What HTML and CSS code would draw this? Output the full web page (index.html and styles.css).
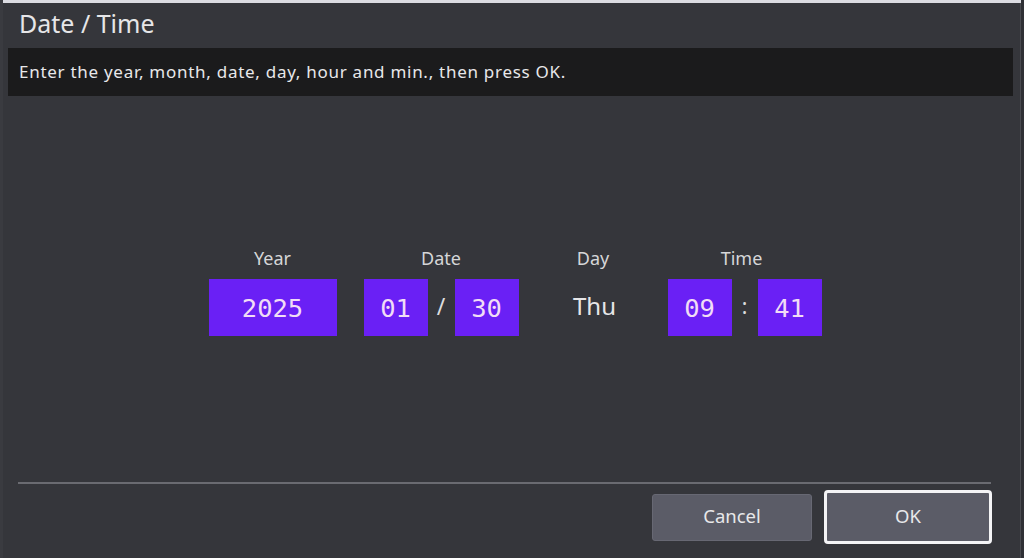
FILE: index.html
```html
<!DOCTYPE html>
<html>
<head>
<meta charset="utf-8">
<link rel="stylesheet" href="styles.css">
</head>
<body>
<div class="screen">
  <div class="topstrip"></div>
  <h1 class="title">Date / Time</h1>
  <div class="msg">Enter the year, month, date, day, hour and min., then press OK.</div>
  <div class="fields">
    <div class="group g-year">
      <div class="label">Year</div>
      <div class="row"><div class="box wide">2025</div></div>
    </div>
    <div class="group g-date">
      <div class="label">Date</div>
      <div class="row"><div class="box">01</div><span class="sep">/</span><div class="box">30</div></div>
    </div>
    <div class="group g-day">
      <div class="label">Day</div>
      <div class="row"><span class="day">Thu</span></div>
    </div>
    <div class="group g-time">
      <div class="label label-time">Time</div>
      <div class="row"><div class="box">09</div><span class="sep colon">:</span><div class="box">41</div></div>
    </div>
  </div>
  <div class="footer">
    <div class="divider"></div>
    <div class="buttons">
      <button class="btn cancel">Cancel</button>
      <button class="btn ok">OK</button>
    </div>
  </div>
</div>
</body>
</html>
```
FILE: styles.css
```css
html, body {
  margin: 0;
  padding: 0;
  background: #35363b;
}
body {
  font-family: "Noto Sans", "Open Sans", "DejaVu Sans", sans-serif;
  color: #e4e4e6;
}
.screen {
  width: 1024px;
  height: 558px;
  box-sizing: border-box;
  border-left: 3px solid #3a3b40;
  border-right: 3px solid #2f3035;
  box-shadow: inset -1px 0 0 #4a4b50;
  overflow: hidden;
}
.topstrip {
  height: 3px;
  background: #dcdce2;
  margin-left: -3px;
}
.title {
  margin: 0;
  height: 45px;
  line-height: 40px;
  padding-left: 16px;
  font-size: 25px;
  font-weight: normal;
  color: #e6e6e8;
}
.msg {
  margin: 0 8px 0 5px;
  height: 48px;
  line-height: 48px;
  padding-left: 11px;
  background: #1b1b1c;
  font-size: 17px;
  letter-spacing: 0.72px;
  color: #e8e8ea;
}
.fields {
  display: flex;
  justify-content: center;
  gap: 27px;
  padding: 152px 0 0 6px;
  height: 386px;
  box-sizing: border-box;
}
.group {
  display: flex;
  flex-direction: column;
  align-items: center;
}
.g-day { width: 95px; }
.label {
  font-size: 18px;
  line-height: 20px;
  height: 20px;
  margin-bottom: 11px;
  color: #d6d6d8;
}
.label-time { margin-right: 6px; }
.row {
  display: flex;
  align-items: center;
  height: 57px;
}
.box {
  width: 64px;
  height: 57px;
  background: #6a20f5;
  color: #f1dcf6;
  font-family: "DejaVu Sans Mono", "Liberation Mono", monospace;
  font-size: 25.5px;
  display: flex;
  align-items: center;
  justify-content: center;
}
.box.wide { width: 128px; }
.sep {
  width: 27px;
  text-align: center;
  font-size: 23px;
  color: #dcdcde;
  padding-bottom: 4px;
}
.colon { width: 26px; font-size: 21px; }
.day {
  font-size: 24px;
  color: #e6e6e8;
  padding-bottom: 4px;
  padding-left: 3px;
}
.footer {
  padding: 0 15px;
}
.divider {
  height: 2px;
  background: #6a6b71;
  margin-right: 15px;
}
.buttons {
  display: flex;
  justify-content: flex-end;
  align-items: center;
  gap: 12px;
  height: 66px;
  padding-right: 14px;
}
.btn {
  font-family: "Noto Sans", "Open Sans", "DejaVu Sans", sans-serif;
  font-size: 18.5px;
  color: #e8e8ea;
  background: #5b5c67;
  border-radius: 3px;
  padding: 0 0 3px 0;
  margin: 0;
}
.cancel {
  width: 160px;
  height: 47px;
  border: 1px solid #676873;
}
.ok {
  width: 168px;
  height: 54px;
  border: 3px solid #f4f4f6;
  border-radius: 4px;
}
```
